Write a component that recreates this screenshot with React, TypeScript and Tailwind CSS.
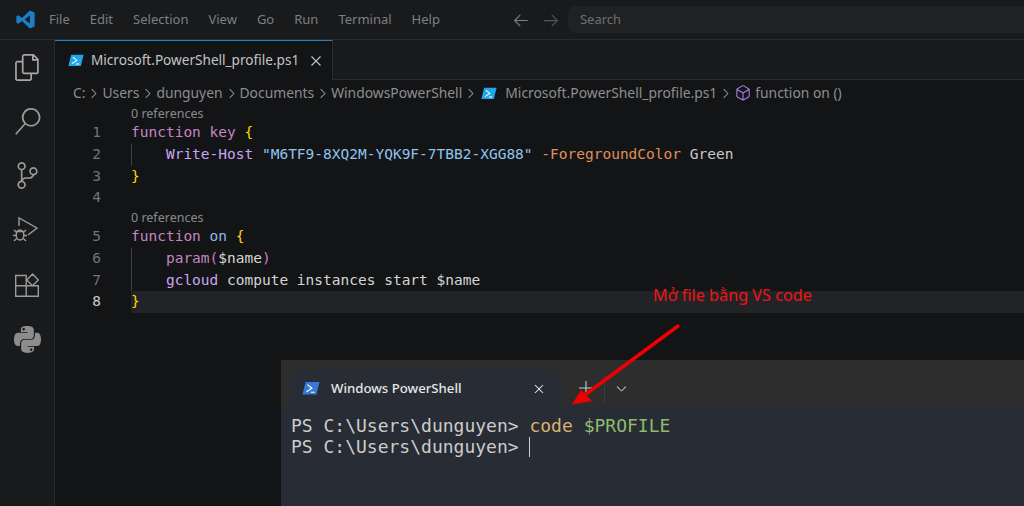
import React from 'react';
import {
  VscFiles,
  VscSearch,
  VscSourceControl,
  VscChevronRight,
  VscClose,
  VscArrowLeft,
  VscArrowRight,
  VscSymbolMethod,
  VscChevronDown,
  VscAdd,
} from 'react-icons/vsc';
import { FaPython } from 'react-icons/fa';

const uiFont = "font-['Noto_Sans',sans-serif]";
const monoFont = "font-['DejaVu_Sans_Mono',monospace]";

const VsLogo = () => (
  <svg width="19" height="19" viewBox="0 0 24 24">
    <path d="M17.5 0.5L23.5 3.3V20.7L17.5 23.5L7.5 14L3 17.5L0.5 16V8L3 6.5L7.5 10zM17.5 7L11 12L17.5 17z" fill="#1b7fc4" fillRule="evenodd" />
  </svg>
);

// run & debug: outlined triangle with a bug at the bottom left
const DebugIcon = () => (
  <svg width="28" height="28" viewBox="0 0 28 28" fill="none" stroke="currentColor" strokeWidth="1.4">
    <path d="M6 10V2L24 12L15 19" />
    <ellipse cx="7" cy="19" rx="3.8" ry="5" />
    <path d="M1 14L3.7 16.5M13 14L10.3 16.5M1 25L3.7 22.5M13 25L10.3 22.5M0 19.5H3M11 19.5H14M3.5 15.5H10.5" />
  </svg>
);

// the extensions icon in the screenshot has a diamond top right
const ExtensionsIcon = () => (
  <svg width="24" height="24" viewBox="0 0 24 24" fill="none" stroke="currentColor" strokeWidth="1.4">
    <path d="M0.7 2.5H11.2V23.3H0.7zM0.7 12.8H23.3V23.3H11.2" />
    <path d="M11.8 7L17.5 1L23.3 7L17.5 12.8z" strokeLinejoin="round" />
  </svg>
);

// small blue PowerShell badge
const PsIcon = ({ color = '#1fa6ea', size = 16 }: { color?: string; size?: number }) => (
  <svg width={size} height={size * 0.8} viewBox="0 0 20 16" className="shrink-0">
    <path d="M4 1h15.5L16 15H.5z" fill={color} />
    <path d="M6 4l5 4-6 4M10 12.5h4" stroke="#fff" strokeWidth="1.3" fill="none" />
  </svg>
);

const Crumb = ({ children }: { children: React.ReactNode }) => (
  <>
    <span>{children}</span>
    <VscChevronRight className="mx-[1px] text-[15px] text-[#a0a0a0]" />
  </>
);

const ActivityItem = ({ children }: { children: React.ReactNode }) => (
  <div className="flex h-[54.4px] items-center justify-center">{children}</div>
);

const CodeLens = () => (
  <div className="h-[17.2px] pl-[131px] text-[12.5px] leading-[17.2px] text-[#8a8a8a]">
    <span className={uiFont}>0 references</span>
  </div>
);

const Line = ({
  n,
  guide,
  active,
  children,
}: {
  n: number;
  guide?: boolean;
  active?: boolean;
  children?: React.ReactNode;
}) => (
  <div className={`flex h-[21.7px] leading-[21.7px] ${monoFont} text-[14.5px]`}>
    <div className={`ml-[55px] w-[47px] shrink-0 pr-[1px] text-right ${active ? 'text-[#cccccc]' : 'text-[#6e7681]'}`}>{n}</div>
    <div className={`ml-[29px] flex-1 whitespace-pre ${active ? 'bg-[#222326]' : ''} ${guide ? 'border-l border-[#404040]' : 'border-l border-transparent'} -indent-[1px]`}>
      {children}
    </div>
  </div>
);

const App: React.FC = () => {
  return (
    <div className="relative h-[506px] w-[1024px] overflow-hidden bg-[#131416] text-[#cccccc]">
      {/* Title bar */}
      <div className={`flex h-[40px] items-center border-b border-[#2b2b2b] bg-[#181a1c] ${uiFont} text-[13px]`}>
        <div className="flex w-[49px] justify-center pl-[2px]">
          <VsLogo />
        </div>
        <div className="flex gap-[20px] text-[#7d7f82]">
          <span>File</span>
          <span>Edit</span>
          <span>Selection</span>
          <span>View</span>
          <span>Go</span>
          <span>Run</span>
          <span>Terminal</span>
          <span>Help</span>
        </div>
        <div className="ml-[72px] flex items-center gap-[12px] text-[18px]">
          <VscArrowLeft className="text-[#7d7f82]" />
          <VscArrowRight className="text-[#55575a]" />
        </div>
        <div className="ml-[8px] flex h-[27px] flex-1 items-center rounded-l-[7px] bg-[#1f2123] pl-[12px] text-[#6d6f72]">
          Search
        </div>
      </div>

      <div className="flex h-[466px]">
        {/* Activity bar */}
        <div className="w-[55px] shrink-0 border-r border-[#2b2b2b] bg-[#181a1c] text-[27px] text-[#9a9a9a]">
          <ActivityItem>
            <VscFiles className="text-[#a8a8a8]" />
          </ActivityItem>
          <ActivityItem>
            <VscSearch />
          </ActivityItem>
          <ActivityItem>
            <VscSourceControl />
          </ActivityItem>
          <ActivityItem>
            <DebugIcon />
          </ActivityItem>
          <ActivityItem>
            <ExtensionsIcon />
          </ActivityItem>
          <ActivityItem>
            <FaPython className="text-[31px] text-[#8c8c8c]" />
          </ActivityItem>
        </div>

        {/* Editor */}
        <div className="flex-1">
          <div className="flex h-[40px] border-b border-[#2b2b2b] bg-[#181a1c]">
            <div className={`flex h-[40px] w-[278px] items-center border-t border-r border-t-[#1a84c9] border-r-[#2b2b2b] bg-[#131416] pl-[13px] ${uiFont} text-[13.6px] text-[#c4c4c4]`}>
              <PsIcon />
              <span className="ml-[7px]">Microsoft.PowerShell_profile.ps1</span>
              <VscClose className="ml-[8px] text-[18px] text-[#cccccc]" />
            </div>
          </div>
          <div className={`flex h-[25px] items-center pl-[18px] pt-[1px] ${uiFont} text-[13.85px] text-[#8e8e8e]`}>
            <Crumb>C:</Crumb>
            <Crumb>Users</Crumb>
            <Crumb>dunguyen</Crumb>
            <Crumb>Documents</Crumb>
            <Crumb>WindowsPowerShell</Crumb>
            <span className="ml-[2px]">
              <PsIcon />
            </span>
            <span className="ml-[8px]">Microsoft.PowerShell_profile.ps1</span>
            <VscChevronRight className="mx-[1px] text-[15px] text-[#a0a0a0]" />
            <VscSymbolMethod className="text-[18px] text-[#a67be8]" />
            <span className="ml-[3px]">function on ()</span>
          </div>
          <div className="ml-[-55px]">
            <CodeLens />
            <Line n={1}>
              <span className="text-[#c586c0]">function key </span>
              <span className="text-[#ffd700]">{'{'}</span>
            </Line>
            <Line n={2} guide>
              <span className="text-[#c8a5f5]">{'    Write-Host '}</span>
              <span className="text-[#8fc4ee]">"M6TF9-8XQ2M-YQK9F-7TBB2-XGG88" </span>
              <span className="text-[#e0915a]">-ForegroundColor </span>
              <span className="text-[#c8c8c8]">Green</span>
            </Line>
            <Line n={3}>
              <span className="text-[#ffd700]">{'}'}</span>
            </Line>
            <Line n={4} />
            <CodeLens />
            <Line n={5}>
              <span className="text-[#c586c0]">function </span>
              <span className="text-[#8fb8e8]">on </span>
              <span className="text-[#ffd700]">{'{'}</span>
            </Line>
            <Line n={6} guide>
              <span className="text-[#c586c0]">{'    param'}</span>
              <span className="text-[#da70d6]">(</span>
              <span className="text-[#d4d4d4]">$name</span>
              <span className="text-[#da70d6]">)</span>
            </Line>
            <Line n={7} guide>
              <span className="text-[#c8a5f5]">{'    gcloud '}</span>
              <span className="text-[#d4d4d4]">compute instances start $name</span>
            </Line>
            <Line n={8} active>
              <span className="text-[#ffd700]">{'}'}</span>
            </Line>
          </div>
        </div>
      </div>

      {/* Annotation */}
      <div className={`absolute left-[653px] top-[284px] ${uiFont} text-[16.2px] leading-[22px] text-[#f01414]`}>Mở file bằng VS code</div>

      {/* Windows Terminal over the editor */}
      <div className="absolute left-[281px] top-[360px] h-[146px] w-[743px] bg-[#282c34]">
        <div className="flex h-[46px] items-end bg-[#2d2d2d] pl-[10px]">
          <div className={`flex h-[36px] w-[272px] items-center rounded-t-[8px] bg-[#282c34] pl-[11px] pt-[1px] ${uiFont} text-[13.2px] text-[#e6e6e6]`}>
            <PsIcon color="#3a78d8" size={18} />
            <span className="ml-[11px] flex-1 font-medium">Windows PowerShell</span>
            <VscClose className="mr-[16px] text-[16px]" />
          </div>
          <div className="flex h-[36px] items-center pl-[15px] pt-[1px] text-[#d0d0d0]">
            <VscAdd className="text-[17px]" />
            <div className="mx-[9px] h-[28px] w-px bg-[#3c3c3c]" />
            <VscChevronDown className="text-[15px]" />
          </div>
        </div>
        <div className={`pl-[10px] pt-[9px] ${monoFont} text-[18px] leading-[21.4px] whitespace-pre text-[#cccccc]`}>
          <div>
            {'PS C:\\Users\\dunguyen> '}
            <span className="text-[#d9b26f]">code</span> <span className="text-[#8fbc6f]">$PROFILE</span>
          </div>
          <div className="flex items-center">
            {'PS C:\\Users\\dunguyen> '}
            <span className="h-[20px] w-px bg-[#cccccc]" />
          </div>
        </div>
      </div>

      {/* Red arrow */}
      <svg className="absolute left-0 top-0" width="1024" height="506" fill="none">
        <path d="M678 326L586 394" stroke="#f00000" strokeWidth="3.5" strokeLinecap="round" />
        <path d="M572 404.5L581 390L592 401z" fill="#f00000" />
      </svg>
    </div>
  );
};

export default App;
